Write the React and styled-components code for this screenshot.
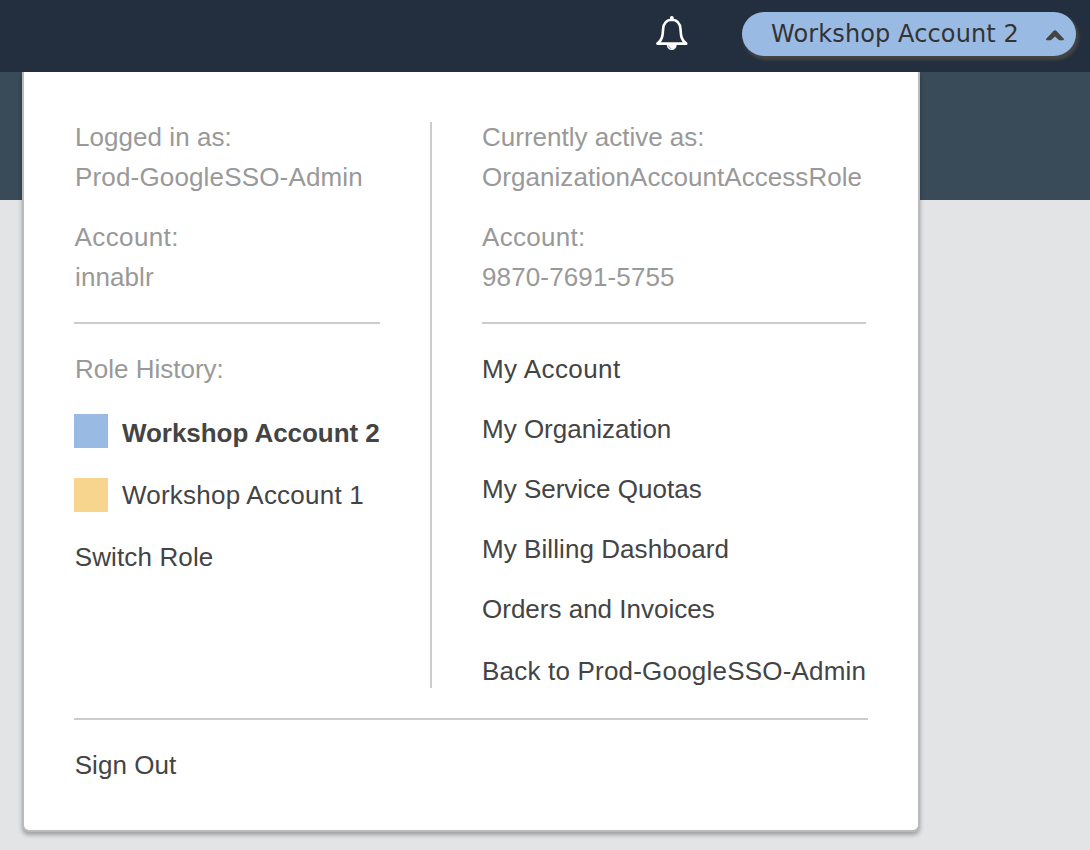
import React from "react";
import styled, { createGlobalStyle } from "styled-components";

const GlobalStyle = createGlobalStyle`
  *, *::before, *::after { box-sizing: border-box; }
  body { margin: 0; background: #e3e4e6; overflow: hidden; }
`;

const Page = styled.div`
  position: relative;
  height: 850px;
  font-family: "Liberation Sans", Arial, sans-serif;
  font-size: 26px;
  line-height: 40px;
  color: #444;
`;

const Header = styled.header`
  display: flex;
  justify-content: flex-end;
  align-items: flex-start;
  height: 72px;
  padding: 12px 14px 0 0;
  background: #232f3e;
`;

const Band = styled.div`
  height: 128px;
  background: #394b58;
`;

const BellButton = styled.button`
  display: flex;
  margin: 2px 52px 0 0;
  padding: 0;
  border: 0;
  background: none;
`;

const AccountButton = styled.button`
  display: flex;
  align-items: flex-start;
  justify-content: space-between;
  width: 334px;
  height: 44px;
  padding: 0 11px 0 29px;
  border: 0;
  border-radius: 22px;
  background: #99bae3;
  box-shadow: 2px 3px 3px 1px #444;
  color: #333;
  font: 24px/44px "DejaVu Sans", Verdana, sans-serif;
  letter-spacing: 0.12px;
  white-space: nowrap;
`;

const Caret = styled.svg`
  margin-top: 17px;
`;

const Menu = styled.section`
  position: absolute;
  top: 72px;
  left: 22px;
  width: 898px;
  height: 760px;
  padding: 45px 50px 0;
  border: 2px solid #bababa;
  border-top: 0;
  border-radius: 0 0 7px 7px;
  background: #fff;
  box-shadow: 0 3px 4px rgba(0, 0, 0, 0.3);
  clip-path: inset(0 -10px -18px -10px);
`;

const Columns = styled.div`
  display: flex;
  height: 571px;
`;

const Column = styled.div`
  width: ${(p) => p.$width}px;
`;

const VerticalRule = styled.div`
  width: 2px;
  margin: 5px 50px 0;
  background: #ccc;
`;

const Rule = styled.hr`
  height: 2px;
  margin: ${(p) => p.$top}px 0 25px;
  border: 0;
  background: #ccc;
`;

const Info = styled.div`
  margin-bottom: ${(p) => (p.$last ? 0 : 20)}px;
  color: #999;
`;

const Line = styled.div`
  height: 40px;
  padding-left: ${(p) => p.$indent || 0}px;
  color: ${(p) => (p.$muted ? "#999" : "inherit")};
  letter-spacing: ${(p) => p.$track || 0}px;
  white-space: nowrap;
`;

const Links = styled.nav`
  display: flex;
  flex-direction: column;
  gap: 20px;
`;

const History = styled.div`
  display: flex;
  flex-direction: column;
  gap: 22px;
  margin-top: 24px;
`;

const RoleRow = styled.div`
  display: flex;
  gap: 14px;
  height: 40px;
  font-weight: ${(p) => (p.$active ? 700 : 400)};
`;

const Swatch = styled.span`
  flex: none;
  width: 34px;
  height: 34px;
  margin-top: ${(p) => p.$top}px;
  background: ${(p) => p.$color};
`;

const LastLink = styled.div`
  margin-top: 2px;
`;

const links = [
  ["My Account", 0.42],
  ["My Organization", 0],
  ["My Service Quotas", 0],
  ["My Billing Dashboard", 0.07],
  ["Orders and Invoices", 0],
];

export default function App() {
  return (
    <Page>
      <GlobalStyle />
      <Header>
        <BellButton aria-label="Notifications">
          <svg width="36" height="40" viewBox="0 0 36 40" fill="none">
            <path
              d="M3.4 29.6C8.6 25.6 8.7 21.5 9.1 15.2C9.5 9 12.2 6 17.8 5.8C23.4 6 26.1 9 26.5 15.2C26.9 21.5 27 25.6 32.2 29.6Z"
              stroke="#fff"
              strokeWidth="2.6"
              strokeLinejoin="round"
            />
            <circle cx="17.8" cy="4" r="2" fill="#fff" />
            <path d="M12.7 30.5H22.8C22.6 34.1 20.5 36 17.8 36C15 36 12.9 34.1 12.7 30.5Z" fill="#fff" />
            <path d="M14.4 31.5C14.8 33 16 34.3 17.5 34.8" stroke="#596472" strokeWidth="0.7" />
          </svg>
        </BellButton>
        <AccountButton>
          Workshop Account 2
          <Caret width="20" height="14" viewBox="0 0 20 14">
            <path d="M1 10L8.5 2Q10 .5 11.5 2L19 10Q19 11.2 18 11.2H14.2L10 7.5L5.8 11.2H2Q1 11.2 1 10Z" fill="#444" />
          </Caret>
        </AccountButton>
      </Header>
      <Band />
      <Menu>
        <Columns>
          <Column $width={306}>
            <Info>
              <Line $indent={1} $track={0.05}>Logged in as:</Line>
              <Line $indent={1} $track={0.16}>Prod-GoogleSSO-Admin</Line>
            </Info>
            <Info $last>
              <Line $indent={0.5} $track={0.4}>Account:</Line>
              <Line $indent={1} $track={0.1}>innablr</Line>
            </Info>
            <Rule $top={25} />
            <Line $muted $indent={1}>Role History:</Line>
            <History>
              <RoleRow $active>
                <Swatch $color="#99bae3" $top={1} />
                <Line $track={-0.05}>Workshop Account 2</Line>
              </RoleRow>
              <RoleRow>
                <Swatch $color="#f8d58f" $top={3} />
                <Line $track={0.22}>Workshop Account 1</Line>
              </RoleRow>
              <Line $indent={0.7} $track={0.13}>Switch Role</Line>
            </History>
          </Column>
          <VerticalRule />
          <Column $width={384}>
            <Info>
              <Line>Currently active as:</Line>
              <Line $track={0.05}>OrganizationAccountAccessRole</Line>
            </Info>
            <Info $last>
              <Line $track={0.3}>Account:</Line>
              <Line $track={0.13}>9870-7691-5755</Line>
            </Info>
            <Rule $top={25} />
            <Links>
              {links.map(([label, track]) => (
                <Line key={label} $track={track}>{label}</Line>
              ))}
              <LastLink>
                <Line $track={0.2}>Back to Prod-GoogleSSO-Admin</Line>
              </LastLink>
            </Links>
          </Column>
        </Columns>
        <Rule $top={30} />
        <Line $indent={0.7} $track={0.05}>Sign Out</Line>
      </Menu>
    </Page>
  );
}
